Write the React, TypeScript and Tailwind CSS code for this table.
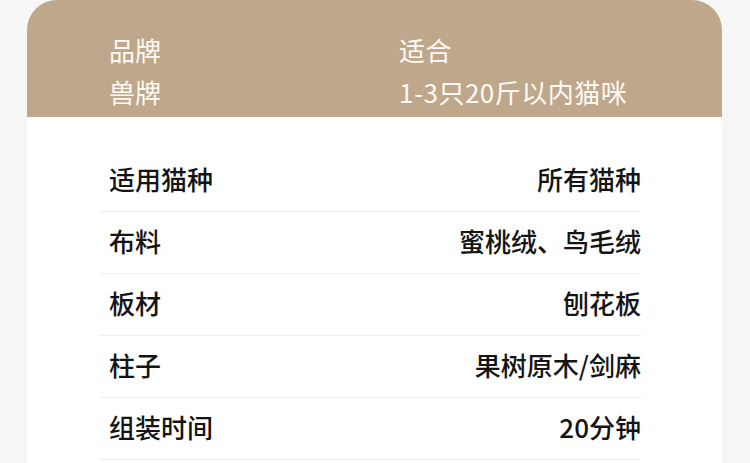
import React from "react";

const rows: [string, string][] = [
  ["适用猫种", "所有猫种"],
  ["布料", "蜜桃绒、鸟毛绒"],
  ["板材", "刨花板"],
  ["柱子", "果树原木/剑麻"],
  ["组装时间", "20分钟"],
];

export default function App() {
  return (
    <div
      className="w-[750px] h-[463px] overflow-hidden bg-[#f6f6f6]"
      style={{ fontFamily: '"Noto Sans CJK SC", "Noto Sans", sans-serif' }}
    >
      <div className="ml-[27px] w-[695px] h-full bg-white rounded-t-[30px] overflow-hidden">
        <div className="bg-[#bfa78b] h-[117px] pt-[29px] pl-[82px] flex text-[26px] leading-[42px] text-[#fffaf3]">
          <div className="w-[290px] flex flex-col">
            <span>品牌</span>
            <span>兽牌</span>
          </div>
          <div className="flex flex-col tracking-[0.5px]">
            <span>适合</span>
            <span>1-3只20斤以内猫咪</span>
          </div>
        </div>
        <div className="pt-[33px] ml-[73px] w-[541px]">
          {rows.map(([k, v]) => (
            <div
              key={k}
              className="h-[62px] border-b border-[#ededed] flex items-center justify-between pl-[9px] text-[26px] font-medium text-[#141414] pb-[4px]"
            >
              <span>{k}</span>
              <span>{v}</span>
            </div>
          ))}
        </div>
      </div>
    </div>
  );
}
